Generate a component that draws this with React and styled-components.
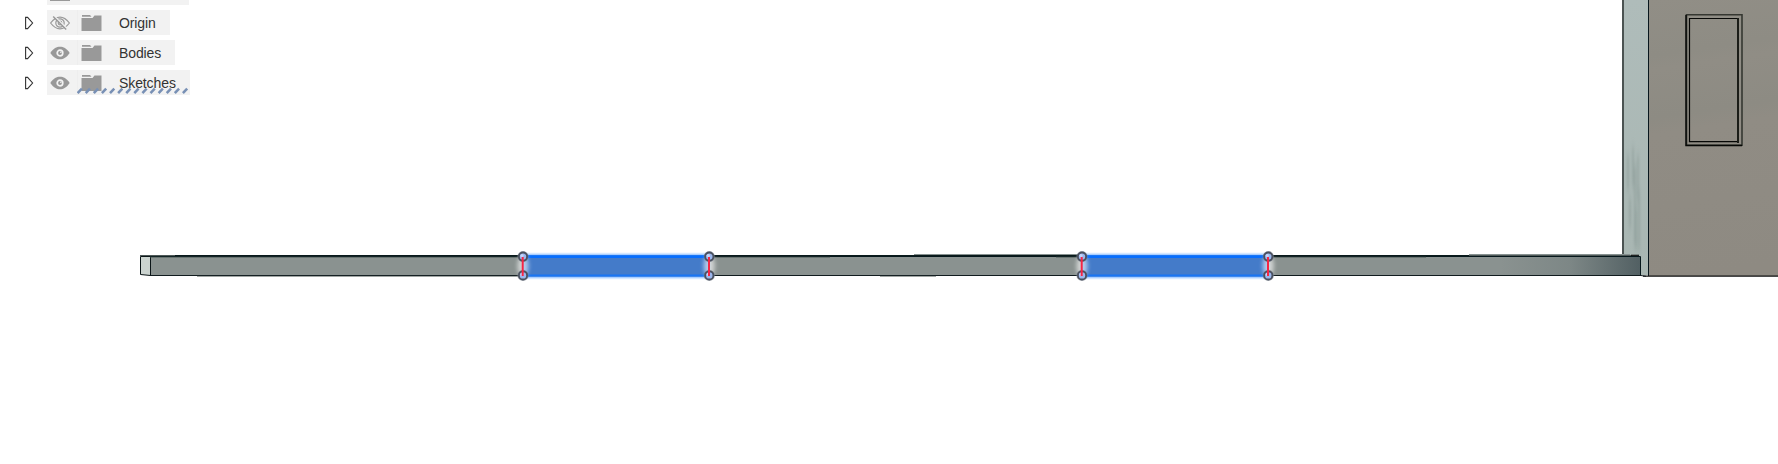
import React from 'react';
import styled, { createGlobalStyle } from 'styled-components';

const GlobalStyle = createGlobalStyle`
  body { margin: 0; background: #fff; overflow: hidden; }
`;

const Viewport = styled.main`
  position: relative;
  width: 1778px;
  height: 464px;
  overflow: hidden;
  background: #fff;
  font-family: "Liberation Sans", Arial, sans-serif;
`;

const Scene = styled.svg`
  position: absolute;
  inset: 0;
  display: block;
`;

const Browser = styled.nav`
  position: relative;
  display: flex;
  flex-direction: column;
  gap: 5px;
  width: 200px;
`;

const ClippedRow = styled.div`
  width: 142px;
  height: 5px;
  margin-left: 47px;
  background: #f2f2f2;
`;

const FolderEdge = styled.div`
  width: 20px;
  height: 1px;
  margin-left: 3px;
  background: #999;
`;

const Row = styled.div`
  display: flex;
  align-items: center;
  height: 25px;
`;

const Expander = styled.svg`
  flex: none;
  width: 10px;
  height: 14px;
  margin: 1px 13px 0 24px;
`;

const Item = styled.div`
  position: relative;
  display: flex;
  align-items: center;
  width: ${({ $width }) => $width}px;
  height: 25px;
  background: #f2f2f2;
`;

const EyeCell = styled.div`
  display: flex;
  align-items: center;
  justify-content: center;
  width: 31px;
  height: 25px;
  box-sizing: border-box;
  padding: 1px 4px 0 0;
  border-right: 1px solid #eeeeee;
`;

const Folder = styled.svg`
  width: 21px;
  height: 17px;
  margin-left: 3px;
`;

const Label = styled.span`
  margin-left: 17px;
  padding-top: 2px;
  color: #333;
  font-size: 14px;
  letter-spacing: -0.1px;
  line-height: 25px;
`;

const Hatch = styled.svg`
  position: absolute;
  left: 30px;
  top: 17px;
`;

function Eye({ hidden }) {
  return (
    <svg width="20" height="14" viewBox="0 0 20 14" fill="none">
      {hidden ? (
        <g stroke="#999" strokeWidth="1.2">
          <path d="M.6 7Q5 1.2 10 1.2T19.4 7Q15 12.8 10 12.8T.6 7Z" />
          <circle cx="10" cy="7" r="4.2" />
          <circle cx="10" cy="7" r="1.8" />
          <path d="M4.6 .5L17.6 13.2" stroke="#f2f2f2" strokeWidth="1.6" />
          <path d="M3.2 .5L16.2 13.5" strokeWidth="1.4" />
        </g>
      ) : (
        <>
          <path d="M.3 7C3.5 2.3 6.5 .8 10 .8S16.5 2.3 19.7 7C16.5 11.7 13.5 13.2 10 13.2S3.5 11.7 .3 7Z" fill="#999" />
          <circle cx="10" cy="7" r="2.8" fill="#999" stroke="#f2f2f2" strokeWidth="1.7" />
          <circle cx="10.8" cy="6.2" r=".8" fill="#f2f2f2" />
        </>
      )}
    </svg>
  );
}

function TreeRow({ label, width, hidden, active }) {
  return (
    <Row>
      <Expander viewBox="0 0 10 14">
        <path d="M1.6 1.4H3.6L8.6 7L3.6 12.6H1.6Z" fill="#fff" stroke="#333" strokeWidth="1.1" />
      </Expander>
      <Item $width={width}>
        <EyeCell><Eye hidden={hidden} /></EyeCell>
        <Folder viewBox="0 0 21 17">
          <path d="M1 1H9L10.5 2.8H1ZM.5 4H11.5L13.5 1.6H20.5V17H.5Z" fill="#999" />
        </Folder>
        <Label>{label}</Label>
        {active && (
          <Hatch width="112" height="8" viewBox="0 0 112 8">
            {Array.from({ length: 14 }, (_, i) => (
              <path key={i} d={`M${1.5 + i * 8.1} 5.2L${4 + i * 8.1} 2.6`} stroke="#7890b5" strokeWidth="2.5" strokeLinecap="square" />
            ))}
          </Hatch>
        )}
      </Item>
    </Row>
  );
}

function Selection({ left, right }) {
  return (
    <g>
      <rect x={left} y="254" width={right - left} height="24" fill="#80b7ff" filter="url(#edgeGlow)" />
      <rect x={left} y="255.5" width={right - left} height="21" fill="#447bc9" />
      <path d={`M${left} 256.6H${right}`} stroke="#066eff" strokeWidth="2.8" />
      <path d={`M${left} 275.4H${right}`} stroke="#1875f4" strokeWidth="2" />
      {[left, right].map((x) => (
        <g key={x}>
          <ellipse cx={x} cy="266" rx="5.5" ry="11" fill="#fff" opacity=".6" filter="url(#glow)" />
          {[256.6, 275.4].map((y) => (
            <g key={y}>
              <circle cx={x} cy={y} r="5" fill="none" stroke="#777e8b" strokeWidth="1.2" opacity=".6" />
              <circle cx={x} cy={y} r="4.1" fill="#9cb7ed" stroke="#4a505f" strokeWidth="1.8" />
              <circle cx={x - 1} cy={y - 1} r="1.6" fill="#c4d4fa" />
            </g>
          ))}
          <path d={`M${x - 0.3} 257V276`} stroke="#f62545" strokeWidth="2" />
        </g>
      ))}
    </g>
  );
}

function ModelScene() {
  return (
    <Scene width="1778" height="464" viewBox="0 0 1778 464">
      <defs>
        <linearGradient id="face" gradientUnits="userSpaceOnUse" x1="1649" y1="0" x2="1690" y2="276">
          <stop offset="0" stopColor="#918e86" />
          <stop offset=".2" stopColor="#8e8c84" />
          <stop offset=".25" stopColor="#908d85" />
          <stop offset=".42" stopColor="#8d8b83" />
          <stop offset=".48" stopColor="#908c84" />
          <stop offset="1" stopColor="#8e8a82" />
        </linearGradient>
        <linearGradient id="post" x1="0" y1="0" x2="0" y2="1">
          <stop offset="0" stopColor="#afbcba" />
          <stop offset="1" stopColor="#a8b6b2" />
        </linearGradient>
        <linearGradient id="railEnd">
          <stop offset="0" stopColor="#8a9290" />
          <stop offset=".5" stopColor="#7d8786" />
          <stop offset="1" stopColor="#526063" />
        </linearGradient>
        <filter id="glow" x="-1" y="-1" width="3" height="3"><feGaussianBlur stdDeviation="2" /></filter>
        <filter id="edgeGlow" x="-.1" y="-1" width="1.2" height="3"><feGaussianBlur stdDeviation="1.2" /></filter>
        <filter id="grain" filterUnits="userSpaceOnUse" x="1620" y="120" width="32" height="156"><feGaussianBlur stdDeviation=".8 5" /></filter>
      </defs>

      <rect x="1623" width="26" height="275" fill="url(#post)" />
      <g fill="none" stroke="#7c8d89" strokeWidth="1.6" opacity=".5" filter="url(#grain)">
        <path d="M1628 155V190M1633 147V187M1638 155V200M1635 165V245M1636 208V250M1639 190V250M1630 198V228" />
      </g>
      <path d="M1623 0V255" stroke="#4b5352" strokeWidth="2" />
      <rect x="1649" width="129" height="276" fill="url(#face)" />
      <path d="M1648.5 0V276" stroke="#07161d" />
      <path d="M1643 276.1H1778" stroke="#0b0d0c" strokeWidth="1.2" />

      <g fill="none">
        <path d="M1686.5 14.8H1742V145.3H1686.5Z" stroke="#353731" strokeWidth="1.6" />
        <path d="M1686 15V145.5H1742" stroke="#070806" strokeWidth="1.4" />
        <path d="M1689.5 18.5H1738V141.7H1689.5Z" stroke="#070806" strokeWidth="1.2" />
        <path d="M1738 18V143" stroke="#1b1d18" strokeWidth="2" />
      </g>

      <rect x="150" y="256" width="1490" height="19" fill="#8a9290" />
      <rect x="1500" y="256" width="140" height="19" fill="url(#railEnd)" />
      <path d="M140.5 256.5H150.5V275.5L140.5 274.5Z" fill="#cbd3cf" stroke="#0b1517" />
      <path d="M914 254.5H1082M1469 254.5H1630" stroke="#879190" />
      <path d="M140 255.5H175M1469 255.5H1632" stroke="#4e5857" />
      <path d="M175 255.5H1469" stroke="#0a1a1b" />
      <path d="M150 256.5H1640.5V275" fill="none" stroke="#06171b" />
      <path d="M150 257.2H523M709 257.2H830M1056 257.2H1082M1268 257.2H1426" stroke="#46544f" strokeWidth=".7" />
      <path d="M150 275.5H1641L1646 276.3" fill="none" stroke="#101b1e" />
      <path d="M197 276.4H523M880 276.4H936" stroke="#69716f" strokeWidth=".7" />
      <path d="M1631 255.3H1639" stroke="#111" strokeWidth="1.2" />

      <Selection left={523} right={709.3} />
      <Selection left={1082} right={1268.3} />
    </Scene>
  );
}

export default function App() {
  return (
    <>
      <GlobalStyle />
      <Viewport>
        <ModelScene />
        <Browser>
          <ClippedRow><FolderEdge /></ClippedRow>
          <TreeRow label="Origin" width={123} hidden />
          <TreeRow label="Bodies" width={128} />
          <TreeRow label="Sketches" width={143} active />
        </Browser>
      </Viewport>
    </>
  );
}
